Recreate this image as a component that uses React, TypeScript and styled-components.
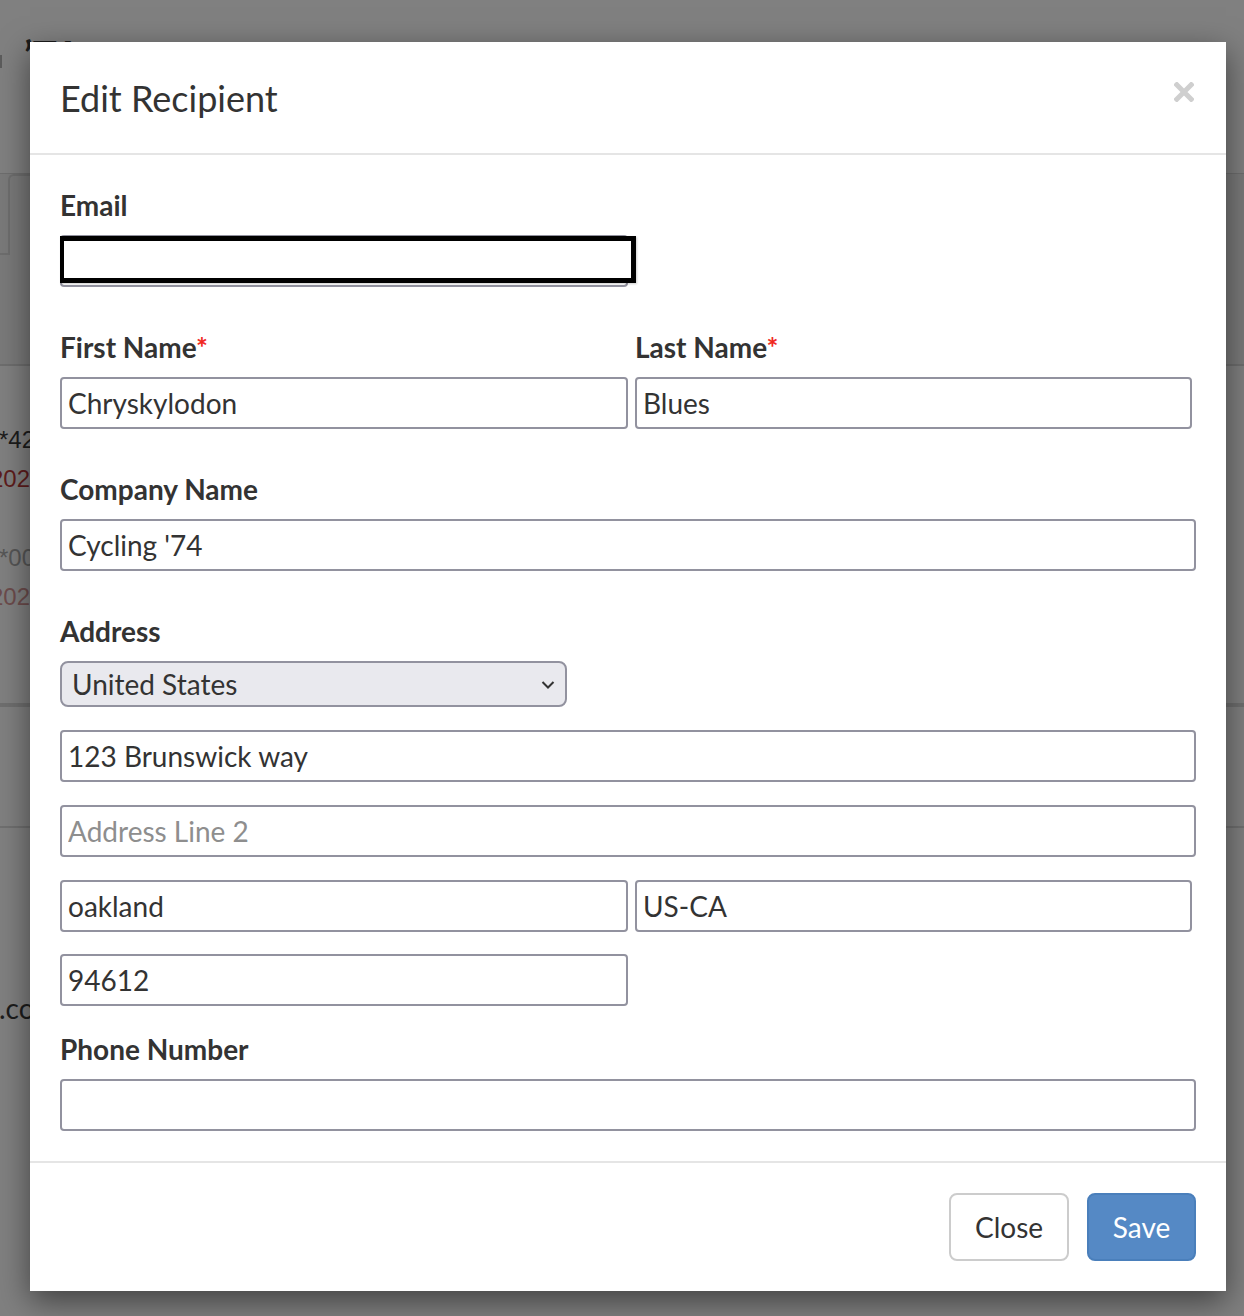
import React from "react";
import styled, { createGlobalStyle } from "styled-components";

const Global = createGlobalStyle`
  html, body { margin: 0; padding: 0; background: #808080; }
  body { font-family: Lato, "Open Sans", sans-serif; color: #333; }
  * { box-sizing: border-box; }
`;

const Page = styled.div`
  position: relative;
  width: 1244px;
  height: 1316px;
  overflow: hidden;
  background: #808080;
`;

const Backdrop = styled.div`
  display: flex;
  flex-direction: column;
  height: 100%;
  padding-top: 37px;
`;

const PageTitle = styled.div`
  height: 136px;
  display: flex;
  font-size: 40px;
  line-height: 36px;
  font-weight: 700;
  color: #1c1c1c;
`;

const EdgeMark = styled.div`
  width: 2px;
  height: 13px;
  margin: 18px 22px 0 0;
  background: #5c5c5c;
`;

const TabBar = styled.div`
  height: 193px;
  display: flex;
  align-items: flex-start;
  background: #7a7a7a;
  border-top: 1px solid #6e6e6e;
  border-bottom: 2px solid #6e6e6e;
`;

const TabEdge = styled.div`
  width: 8px;
  height: 81px;
  border-bottom: 2px solid #6e6e6e;
`;

const Tab = styled.div`
  width: 60px;
  height: 81px;
  border-left: 2px solid #6e6e6e;
  border-top: 2px solid #6e6e6e;
  border-radius: 6px 0 0 0;
`;

const OrderRow = styled.div<{ $height: number; $double?: boolean }>`
  height: ${(p) => p.$height}px;
  border-bottom: ${(p) => (p.$double ? "4px solid #6f6f6f" : "2px solid #707070")};
`;

const Cell = styled.div<{ $faded?: boolean; $red?: boolean }>`
  height: 39px;
  margin-left: ${(p) => (p.$red ? "-10px" : "-1px")};
  font-family: "Liberation Sans", Arial, sans-serif;
  font-size: 24px;
  line-height: 40px;
  white-space: nowrap;
  color: ${(p) => (p.$red ? (p.$faded ? "#6d4c4c" : "#5e1c1c") : p.$faded ? "#565656" : "#1c1c1c")};
`;

const FirstCells = styled.div`
  padding-top: 54px;
`;

const SecondCells = styled.div`
  padding-top: 40px;
`;

const Domain = styled.div`
  padding-top: 160px;
  margin-left: -1px;
  font-size: 28px;
  line-height: 40px;
  color: #1c1c1c;
`;

const Modal = styled.div`
  position: absolute;
  left: 30px;
  top: 42px;
  width: 1196px;
  height: 1249px;
  display: flex;
  flex-direction: column;
  background: #fff;
  box-shadow: 0 10px 30px rgba(0, 0, 0, 0.5);
`;

const Header = styled.div`
  height: 113px;
  flex: none;
  display: flex;
  justify-content: space-between;
  padding: 29px 30px 0 30px;
  border-bottom: 2px solid #e5e5e5;
`;

const Title = styled.h4`
  margin: 0;
  font-size: 36px;
  line-height: 54px;
  font-weight: 400;
  color: #333;
`;

const CloseX = styled.svg`
  width: 20px;
  height: 20px;
  margin: 11px 2px 0 0;
  stroke: #cfcfcf;
  stroke-width: 5;
`;

const Body = styled.form`
  flex: 1;
  display: flex;
  flex-direction: column;
  padding: 0 30px;
`;

const Label = styled.label`
  display: block;
  height: 32px;
  margin-top: 44px;
  margin-bottom: 14px;
  font-size: 28px;
  line-height: 32px;
  font-weight: 700;
  color: #333;
`;

const EmailLabel = styled(Label)`
  margin-top: 34px;
`;

const PhoneLabel = styled(Label)`
  margin-top: 27px;
`;

const Asterisk = styled.span`
  color: #f0291f;
`;

const FieldWrap = styled.div`
  position: relative;
`;

const Input = styled.input<{ $w?: number }>`
  display: block;
  width: ${(p) => (p.$w ? `${p.$w}px` : "100%")};
  height: 52px;
  padding: 0 6px;
  border: 2px solid #92929f;
  border-radius: 4px;
  background: #fff;
  font-family: Lato, "Open Sans", sans-serif;
  font-size: 28px;
  color: #333;
  outline: none;
  &::placeholder { color: #8e8e8e; opacity: 1; }
`;

const ZipInput = styled(Input)`
  margin-top: -1px;
`;

const Redaction = styled.div`
  position: absolute;
  left: 0;
  top: 1px;
  width: 576px;
  height: 47px;
  border: solid #000;
  border-width: 5px 5px 5px 4px;
  background: #fff;
  box-shadow: 1px 1px 2px rgba(0, 0, 0, 0.2);
`;

const TwoCols = styled.div`
  display: grid;
  grid-template-columns: 568px 557px;
  column-gap: 7px;
`;

const ColLabel = styled(Label)`
  margin-top: 0;
`;

const LabelRow = styled(TwoCols)`
  margin-top: 44px;
`;

const AddressStack = styled.div`
  display: flex;
  flex-direction: column;
  gap: 23px;
`;

const SelectBox = styled.div`
  position: relative;
  width: 507px;
  height: 46px;
  display: flex;
  align-items: center;
  padding-left: 10px;
  border: 2px solid #92929f;
  border-radius: 8px;
  background: #e9e9ee;
  font-size: 28px;
  color: #333;
`;

const Chevron = styled.svg`
  position: absolute;
  right: 10px;
  top: 17px;
  width: 14px;
  height: 10px;
  fill: none;
  stroke: #333;
  stroke-width: 2;
`;

const Footer = styled.div`
  flex: none;
  height: 130px;
  display: flex;
  justify-content: flex-end;
  gap: 18px;
  padding: 30px 30px 0;
  border-top: 2px solid #e5e5e5;
`;

const Button = styled.button<{ $primary?: boolean }>`
  height: 68px;
  width: ${(p) => (p.$primary ? "109px" : "120px")};
  border: 2px solid ${(p) => (p.$primary ? "#4a7fbb" : "#ccc")};
  border-radius: 8px;
  background: ${(p) => (p.$primary ? "#5589c5" : "#fff")};
  color: ${(p) => (p.$primary ? "#fff" : "#333")};
  font-family: Lato, "Open Sans", sans-serif;
  font-size: 28px;
`;

export default function App() {
  return (
    <Page>
      <Global />
      <Backdrop>
        <PageTitle>
          <EdgeMark />
          ’TA
        </PageTitle>
        <TabBar>
          <TabEdge />
          <Tab />
        </TabBar>
        <OrderRow $height={341} $double>
          <FirstCells>
            <Cell>*42</Cell>
            <Cell $red>202</Cell>
          </FirstCells>
          <SecondCells>
            <Cell $faded>*00</Cell>
            <Cell $faded $red>202</Cell>
          </SecondCells>
        </OrderRow>
        <OrderRow $height={121} />
        <Domain>.co</Domain>
      </Backdrop>
      <Modal>
        <Header>
          <Title>Edit Recipient</Title>
          <CloseX viewBox="0 0 20 20">
            <path d="M1 1 L19 19 M19 1 L1 19" />
          </CloseX>
        </Header>
        <Body>
          <EmailLabel>Email</EmailLabel>
          <FieldWrap>
            <Input $w={568} readOnly />
            <Redaction />
          </FieldWrap>
          <LabelRow>
            <ColLabel>First Name<Asterisk>*</Asterisk></ColLabel>
            <ColLabel>Last Name<Asterisk>*</Asterisk></ColLabel>
            <Input defaultValue="Chryskylodon" />
            <Input defaultValue="Blues" />
          </LabelRow>
          <Label>Company Name</Label>
          <Input defaultValue="Cycling '74" />
          <Label>Address</Label>
          <AddressStack>
            <SelectBox>
              United States
              <Chevron viewBox="0 0 14 10">
                <path d="M1.5 2 L7 7.5 L12.5 2" />
              </Chevron>
            </SelectBox>
            <Input defaultValue="123 Brunswick way" />
            <Input placeholder="Address Line 2" />
            <TwoCols>
              <Input defaultValue="oakland" />
              <Input defaultValue="US-CA" />
            </TwoCols>
            <ZipInput $w={568} defaultValue="94612" />
          </AddressStack>
          <PhoneLabel>Phone Number</PhoneLabel>
          <Input />
        </Body>
        <Footer>
          <Button type="button">Close</Button>
          <Button type="button" $primary>Save</Button>
        </Footer>
      </Modal>
    </Page>
  );
}
